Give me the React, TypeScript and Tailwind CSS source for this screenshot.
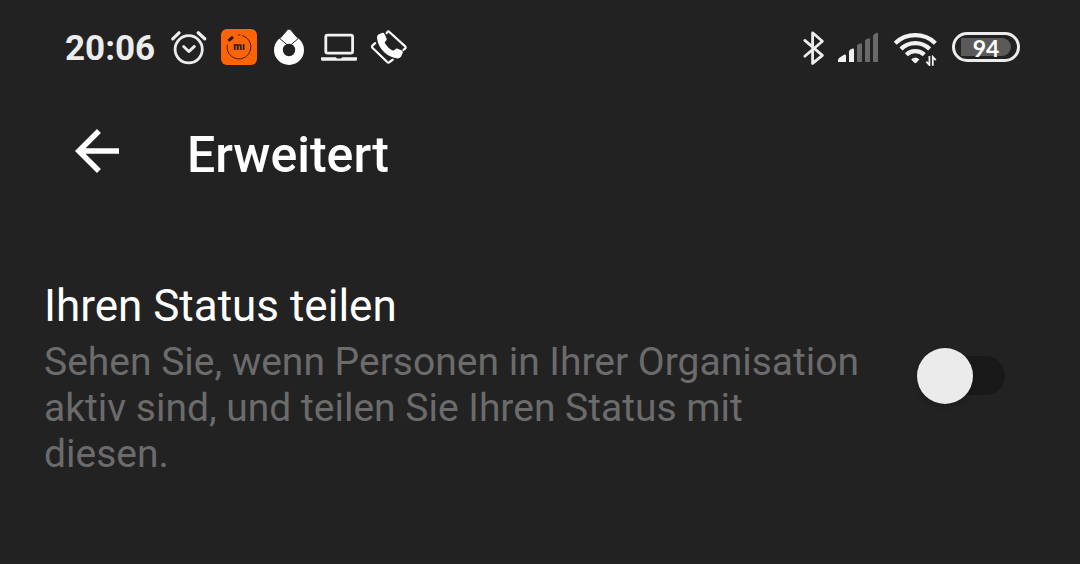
import { useState } from "react";

function AlarmIcon() {
  return (
    <svg aria-hidden="true" viewBox="171 29 36 38" className="h-[38px] w-9" fill="none" stroke="#ececec" strokeWidth="2.8" strokeLinecap="round" strokeLinejoin="round">
      <circle cx="188.7" cy="50.3" r="13.6" />
      <path d="M183.6 47.6 188.8 52.6 194.4 47.4" />
      <path strokeWidth="3.2" d="M172.8 39.8 179 33.8M198.2 33.8 204.7 39.8" />
    </svg>
  );
}

function MiIcon() {
  return (
    <svg aria-hidden="true" viewBox="221 28 36 38" className="h-[38px] w-9">
      <rect x="221" y="29" width="36" height="36" rx="6" fill="#ff6308" />
      <path d="M238 35A12 12 0 0 1 240.4 35M242 35.4A12 12 0 1 1 227.2 44.6" fill="none" stroke="#3a2018" strokeWidth="1" />
      <path d="M228.4 40.8 233 36.8" stroke="#2a1a14" strokeWidth="3" />
      <text x="239" y="50" textAnchor="middle" fontFamily="Roboto, sans-serif" fontWeight="900" fontSize="10" fill="#2a1a14">mı</text>
    </svg>
  );
}

function DropIcon() {
  return (
    <svg aria-hidden="true" viewBox="271 28 36 38" className="h-[38px] w-9">
      <circle cx="289" cy="50" r="15" fill="#fff" />
      <path d="M279.8 38.6 287.6 29.6Q289 28.4 290.4 29.6L298.2 38.6 289 46.4Z" fill="#fff" stroke="#222" strokeWidth="1" />
      <circle cx="289" cy="50" r="6.2" fill="#222" />
    </svg>
  );
}

function LaptopIcon() {
  return (
    <svg aria-hidden="true" viewBox="321 28 36 38" className="h-[38px] w-9">
      <rect x="325.8" y="35.2" width="26.8" height="18" rx="1.6" fill="none" stroke="#f2f2f2" strokeWidth="2.8" />
      <path d="M321 57.3H336Q336.4 58.6 337.6 58.6H340.6Q341.8 58.6 342.2 57.3H357V59.6Q357 60.8 355.8 60.8H322.2Q321 60.8 321 59.6Z" fill="#f2f2f2" />
    </svg>
  );
}

function CallIcon() {
  return (
    <svg aria-hidden="true" viewBox="371 28 38 38" className="h-[38px] w-[38px] overflow-visible" strokeLinejoin="round" strokeLinecap="round">
      <path d="M375.2 43.2 372.6 45.4Q371.4 46.6 372.4 47.8L387.2 62Q388.4 63.2 389.6 62L392.8 59.6M386.6 33.2 387.4 32Q388.4 31 389.4 32L405.2 46.4Q406.2 47.6 405 48.6L403.4 49.8" fill="none" stroke="#fff" strokeWidth="2.2" />
      <path d="M378.4 34.6 382.4 32.8Q383.8 32.4 384.4 33.8L386.6 38.4Q387 39.8 386 40.8L384.6 42.4Q387.8 48.4 393.4 50.8L395.4 49.2Q396.4 48.2 397.8 48.8L401.8 50.6Q403.2 51.4 402.8 52.8L401.2 56.6Q400.2 58.4 397.8 58.4Q390.4 57.8 384.2 52.2Q377.8 46 377 38Q376.8 35.4 378.4 34.6Z" fill="#fff" />
    </svg>
  );
}

function BluetoothIcon() {
  return (
    <svg aria-hidden="true" viewBox="802 28 22 38" className="h-[38px] w-[22px] overflow-visible" fill="none" stroke="#ececec" strokeWidth="2.8" strokeLinecap="round" strokeLinejoin="round">
      <path d="M804.8 40.4 822.4 55.4 812.6 63.4V32.8L822.4 41.2 804.8 56.2" />
    </svg>
  );
}

function SignalIcon() {
  return (
    <svg aria-hidden="true" viewBox="838 28 42 38" className="h-[38px] w-[42px]">
      <path d="M838 62V60Q838 58.8 839 58L844 54.8Q846 53.8 846 56V62ZM849 62V52Q849 50.4 850.4 49.6L852.6 48.6Q854 48.2 854 49.8V62Z" fill="#f2f2f2" />
      <path d="M857 62V46Q857 44.8 858.2 44.2L860.8 43.2Q862 43 862 44.2V62ZM865 62V41Q865 39.8 866.2 39.2L868.8 38.2Q870 38 870 39.2V62ZM873 62V36Q873 34.8 874.2 34.2L876.8 32.8Q878 32.6 878 33.8V62Z" fill="#6a6a6a" />
    </svg>
  );
}

function WifiIcon() {
  return (
    <svg aria-hidden="true" viewBox="894 28 44 38" className="h-[38px] w-11">
      <g fill="none" stroke="#f2f2f2" strokeWidth="4.2" strokeLinecap="butt">
        <path d="M895.2 43.2Q903.6 35.2 915.3 35.2T935.4 43.2" />
        <path d="M901 49Q906.8 43.1 915.3 43.1T929.6 49" />
        <path d="M906.4 54.8Q910 51.2 915.3 51.2T924.2 54.8" />
      </g>
      <path d="M911.2 59.4Q915.3 55.4 919.4 59.4L916.3 62.8Q915.3 63.6 914.3 62.8Z" fill="#f2f2f2" />
      <path d="M929.4 56V65L926.4 61.6M932.8 65.8V57L935.8 60.2" fill="none" stroke="#f2f2f2" strokeWidth="1.8" />
    </svg>
  );
}

function Battery({ level }: { level: number }) {
  return (
    <div className="flex h-[30px] w-[68px] items-center rounded-full border-3 border-[#ececec] px-[6px]">
      <span className="flex h-[18px] w-full items-center justify-center rounded-l-md rounded-r-full bg-[#5a5a5a] pt-[2px] font-['Lato',sans-serif] text-[23px] leading-[18px] font-bold text-white">
        {level}
      </span>
    </div>
  );
}

export default function App() {
  const [shareStatus, setShareStatus] = useState(false);

  return (
    <div className="min-h-screen bg-[#222222] font-['Roboto',sans-serif] text-white">
      <div className="flex items-center justify-between pt-7 pr-[60px] pl-[65px]">
        <div className="flex items-center">
          <span className="mr-4 pt-[3px] text-[35px] leading-[35px] font-bold text-[#ececec]">20:06</span>
          <div className="flex items-center gap-[14px]">
            <AlarmIcon />
            <MiIcon />
            <DropIcon />
            <LaptopIcon />
            <CallIcon />
          </div>
        </div>
        <div className="flex items-center gap-[14px]">
          <BluetoothIcon />
          <SignalIcon />
          <WifiIcon />
          <Battery level={94} />
        </div>
      </div>

      <header className="flex items-center pt-[52px] pl-16">
        <button type="button" aria-label="Zurück" className="mr-[57px]">
          <svg aria-hidden="true" viewBox="0 0 24 24" className="size-[66px]" fill="#fff">
            <path d="M20 11H7.83l5.59-5.59L12 4l-8 8 8 8 1.41-1.41L7.83 13H20v-2z" />
          </svg>
        </button>
        <h1 className="pt-2 text-[50px] leading-[58px] font-medium">Erweitert</h1>
      </header>

      <main className="flex items-center justify-between pt-24 pr-[75px] pl-11">
        <label htmlFor="share-status" className="flex max-w-[830px] flex-col">
          <span className="text-[44px] leading-[52px]">Ihren Status teilen</span>
          <span id="share-status-hint" className="pt-[7px] text-[39px] leading-[46px] text-[#6b6b6b]">
            Sehen Sie, wenn Personen in Ihrer Organisation aktiv sind, und teilen Sie Ihren Status mit diesen.
          </span>
        </label>
        <span className="flex shrink-0 pb-[6px]">
          <input
            id="share-status"
            type="checkbox"
            role="switch"
            aria-describedby="share-status-hint"
            checked={shareStatus}
            onChange={(e) => setShareStatus(e.target.checked)}
            className="flex h-[39px] w-[88px] appearance-none items-center rounded-full bg-[#191919] before:size-14 before:shrink-0 before:rounded-full before:bg-[#ebebeb] before:shadow-md checked:justify-end checked:bg-[#4a4a4a]"
          />
        </span>
      </main>
    </div>
  );
}
